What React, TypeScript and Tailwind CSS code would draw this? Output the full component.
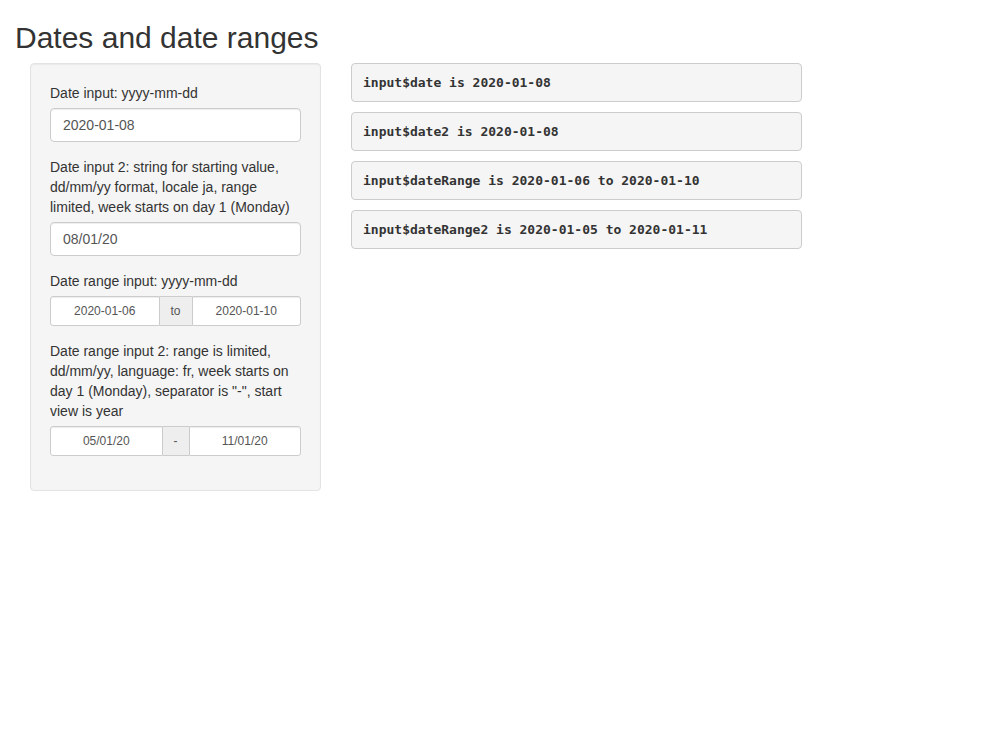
export default function App() {
  const outputs = [
    'input$date is 2020-01-08',
    'input$date2 is 2020-01-08',
    'input$dateRange is 2020-01-06 to 2020-01-10',
    'input$dateRange2 is 2020-01-05 to 2020-01-11',
  ]

  return (
    <div className="min-h-[744px] bg-white px-[15px] font-['Liberation_Sans',Arial,sans-serif] text-[14px] leading-[20px] text-[#333]">
      <h2 className="mt-[21px] mb-[9px] text-[30px] leading-[33px] font-normal text-[#333]">Dates and date ranges</h2>

      <div className="flex items-start">
        {/* Sidebar */}
        <div className="w-[321px] shrink-0 px-[15px]">
          <div className="rounded-[4px] border border-[#e3e3e3] bg-[#f5f5f5] p-[19px] shadow-[inset_0_1px_1px_rgba(0,0,0,0.05)]">
            <div className="mb-[15px]">
              <label className="mb-[5px] block">Date input: yyyy-mm-dd</label>
              <input
                readOnly
                value="2020-01-08"
                className="block h-[34px] w-full rounded-[4px] border border-[#ccc] bg-white px-[12px] py-[6px] text-[14px] text-[#555] shadow-[inset_0_1px_1px_rgba(0,0,0,0.075)] outline-none"
              />
            </div>

            <div className="mb-[15px]">
              <label className="mb-[5px] block">
                Date input 2: string for starting value, dd/mm/yy format, locale ja, range limited, week starts on day 1 (Monday)
              </label>
              <input
                readOnly
                value="08/01/20"
                className="block h-[34px] w-full rounded-[4px] border border-[#ccc] bg-white px-[12px] py-[6px] text-[14px] text-[#555] shadow-[inset_0_1px_1px_rgba(0,0,0,0.075)] outline-none"
              />
            </div>

            <div className="mb-[15px]">
              <label className="mb-[5px] block">Date range input: yyyy-mm-dd</label>
              <div className="flex h-[30px] w-full">
                <input
                  readOnly
                  value="2020-01-06"
                  className="h-[30px] min-w-0 flex-1 rounded-l-[3px] border border-[#ccc] bg-white px-[10px] text-center text-[12px] text-[#555] shadow-[inset_0_1px_1px_rgba(0,0,0,0.075)] outline-none"
                />
                <span className="flex w-[32px] shrink-0 items-center justify-center border-y border-[#ccc] bg-[#eee] text-[12px] text-[#555]">to</span>
                <input
                  readOnly
                  value="2020-01-10"
                  className="h-[30px] min-w-0 flex-1 rounded-r-[3px] border border-[#ccc] bg-white px-[10px] text-center text-[12px] text-[#555] shadow-[inset_0_1px_1px_rgba(0,0,0,0.075)] outline-none"
                />
              </div>
            </div>

            <div className="mb-[15px]">
              <label className="mb-[5px] block">
                Date range input 2: range is limited, dd/mm/yy, language: fr, week starts on day 1 (Monday), separator is "-", start view is year
              </label>
              <div className="flex h-[30px] w-full">
                <input
                  readOnly
                  value="05/01/20"
                  className="h-[30px] min-w-0 flex-1 rounded-l-[3px] border border-[#ccc] bg-white px-[10px] text-center text-[12px] text-[#555] shadow-[inset_0_1px_1px_rgba(0,0,0,0.075)] outline-none"
                />
                <span className="flex w-[26px] shrink-0 items-center justify-center border-y border-[#ccc] bg-[#eee] text-[12px] text-[#555]">-</span>
                <input
                  readOnly
                  value="11/01/20"
                  className="h-[30px] min-w-0 flex-1 rounded-r-[3px] border border-[#ccc] bg-white px-[10px] text-center text-[12px] text-[#555] shadow-[inset_0_1px_1px_rgba(0,0,0,0.075)] outline-none"
                />
              </div>
            </div>
          </div>
        </div>

        {/* Main panel */}
        <div className="w-[481px] shrink-0 px-[15px]">
          {outputs.map(text => (
            <pre
              key={text}
              className="mb-[10px] h-[39px] rounded-[4px] border border-[#ccc] bg-[#f5f5f5] px-[11px] py-[9px] font-['DejaVu_Sans_Mono',monospace] text-[13px] leading-[19px] font-bold text-[#333]"
            >
              {text}
            </pre>
          ))}
        </div>
      </div>
    </div>
  )
}
